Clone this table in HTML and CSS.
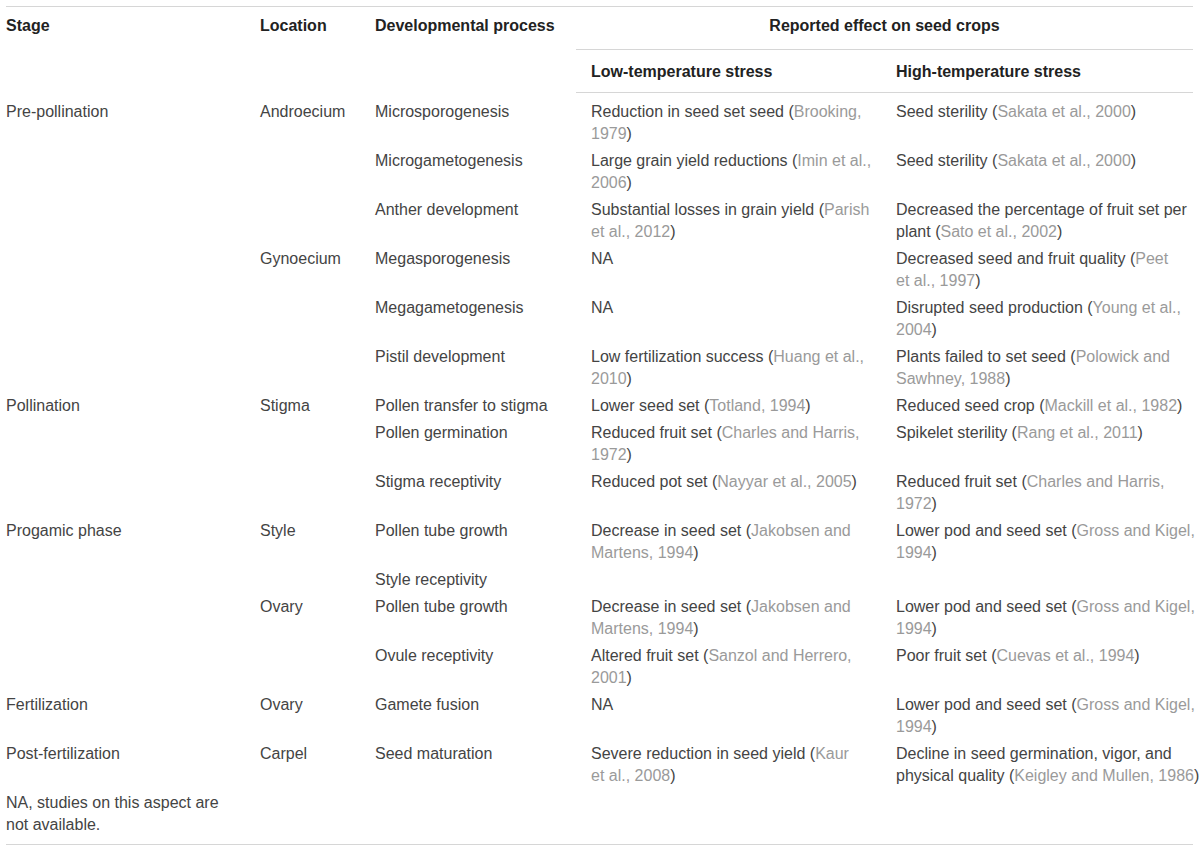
FILE: index.html
```html
<!DOCTYPE html>
<html lang="en">
<head>
    <meta charset="UTF-8">
    <title>Temperature stress and seed crops</title>
    <link rel="stylesheet" href="styles.css">
</head>
<body>
    <table class="effects">
        <colgroup>
            <col class="col-stage">
            <col class="col-location">
            <col class="col-process">
            <col class="col-low">
            <col class="col-high">
        </colgroup>
        <thead>
            <tr class="head-top">
                <th rowspan="2">Stage</th>
                <th rowspan="2">Location</th>
                <th rowspan="2">Developmental process</th>
                <th colspan="2" class="span-head">Reported effect on seed crops</th>
            </tr>
            <tr class="head-sub">
                <th>Low-temperature stress</th>
                <th>High-temperature stress</th>
            </tr>
        </thead>
        <tbody>
            <tr class="first">
                <td>Pre-pollination</td>
                <td>Androecium</td>
                <td>Microsporogenesis</td>
                <td>Reduction in seed set seed (<span class="ref">Brooking,<br>1979</span>)</td>
                <td>Seed sterility (<span class="ref">Sakata et al., 2000</span>)</td>
            </tr>
            <tr>
                <td></td>
                <td></td>
                <td>Microgametogenesis</td>
                <td>Large grain yield reductions (<span class="ref">Imin et al.,<br>2006</span>)</td>
                <td>Seed sterility (<span class="ref">Sakata et al., 2000</span>)</td>
            </tr>
            <tr>
                <td></td>
                <td></td>
                <td>Anther development</td>
                <td>Substantial losses in grain yield (<span class="ref">Parish<br>et al., 2012</span>)</td>
                <td>Decreased the percentage of fruit set per<br>plant (<span class="ref">Sato et al., 2002</span>)</td>
            </tr>
            <tr>
                <td></td>
                <td>Gynoecium</td>
                <td>Megasporogenesis</td>
                <td>NA</td>
                <td>Decreased seed and fruit quality (<span class="ref">Peet<br>et al., 1997</span>)</td>
            </tr>
            <tr>
                <td></td>
                <td></td>
                <td>Megagametogenesis</td>
                <td>NA</td>
                <td>Disrupted seed production (<span class="ref">Young et al.,<br>2004</span>)</td>
            </tr>
            <tr>
                <td></td>
                <td></td>
                <td>Pistil development</td>
                <td>Low fertilization success (<span class="ref">Huang et al.,<br>2010</span>)</td>
                <td>Plants failed to set seed (<span class="ref">Polowick and<br>Sawhney, 1988</span>)</td>
            </tr>
            <tr>
                <td>Pollination</td>
                <td>Stigma</td>
                <td>Pollen transfer to stigma</td>
                <td>Lower seed set (<span class="ref">Totland, 1994</span>)</td>
                <td>Reduced seed crop (<span class="ref">Mackill et al., 1982</span>)</td>
            </tr>
            <tr>
                <td></td>
                <td></td>
                <td>Pollen germination</td>
                <td>Reduced fruit set (<span class="ref">Charles and Harris,<br>1972</span>)</td>
                <td>Spikelet sterility (<span class="ref">Rang et al., 2011</span>)</td>
            </tr>
            <tr>
                <td></td>
                <td></td>
                <td>Stigma receptivity</td>
                <td>Reduced pot set (<span class="ref">Nayyar et al., 2005</span>)</td>
                <td>Reduced fruit set (<span class="ref">Charles and Harris,<br>1972</span>)</td>
            </tr>
            <tr>
                <td>Progamic phase</td>
                <td>Style</td>
                <td>Pollen tube growth</td>
                <td>Decrease in seed set (<span class="ref">Jakobsen and<br>Martens, 1994</span>)</td>
                <td>Lower pod and seed set (<span class="ref">Gross and Kigel,<br>1994</span>)</td>
            </tr>
            <tr>
                <td></td>
                <td></td>
                <td>Style receptivity</td>
                <td></td>
                <td></td>
            </tr>
            <tr>
                <td></td>
                <td>Ovary</td>
                <td>Pollen tube growth</td>
                <td>Decrease in seed set (<span class="ref">Jakobsen and<br>Martens, 1994</span>)</td>
                <td>Lower pod and seed set (<span class="ref">Gross and Kigel,<br>1994</span>)</td>
            </tr>
            <tr>
                <td></td>
                <td></td>
                <td>Ovule receptivity</td>
                <td>Altered fruit set (<span class="ref">Sanzol and Herrero,<br>2001</span>)</td>
                <td>Poor fruit set (<span class="ref">Cuevas et al., 1994</span>)</td>
            </tr>
            <tr>
                <td>Fertilization</td>
                <td>Ovary</td>
                <td>Gamete fusion</td>
                <td>NA</td>
                <td>Lower pod and seed set (<span class="ref">Gross and Kigel,<br>1994</span>)</td>
            </tr>
            <tr>
                <td>Post-fertilization</td>
                <td>Carpel</td>
                <td>Seed maturation</td>
                <td>Severe reduction in seed yield (<span class="ref">Kaur<br>et al., 2008</span>)</td>
                <td>Decline in seed germination, vigor, and<br>physical quality (<span class="ref">Keigley and Mullen, 1986</span>)</td>
            </tr>
        </tbody>
        <tfoot>
            <tr>
                <td class="note">NA, studies on this aspect are<br>not available.</td>
                <td></td>
                <td></td>
                <td></td>
                <td></td>
            </tr>
        </tfoot>
    </table>
</body>
</html>
```

FILE: styles.css
```css
body {
    margin: 0;
    background-color: #fff;
    font-family: "Liberation Sans", Arial, sans-serif;
    font-size: 16px;
    color: #444;
    overflow: hidden;
}
.effects {
    width: 1187px;
    margin: 6px 0 0 6px;
    border-collapse: collapse;
    table-layout: fixed;
    border-top: 1px solid #d6d6d6;
    border-bottom: 1px solid #d6d6d6;
}
.col-stage { width: 239px; }
.col-location { width: 115px; }
.col-process { width: 216px; }
.col-low { width: 305px; }
.col-high { width: 312px; }

th, td {
    text-align: left;
    vertical-align: top;
    line-height: 22px;
    padding: 2px 0 3px 15px;
    white-space: nowrap;
}
th:first-child, td:first-child {
    padding-left: 0;
}
th {
    font-weight: bold;
    color: #222;
}
.head-top th {
    padding-top: 8px;
    padding-bottom: 12px;
}
.head-top th.span-head {
    padding-left: 0;
    text-align: center;
    border-bottom: 1px solid #d6d6d6;
}
.head-sub th {
    padding-top: 11px;
    padding-bottom: 9px;
    border-bottom: 1px solid #d6d6d6;
}
.head-sub th:first-child {
    padding-left: 15px;
}
.first td {
    padding-top: 8px;
}
.ref {
    color: #9a9a9a;
}
.note {
    padding-bottom: 8px;
}
```
